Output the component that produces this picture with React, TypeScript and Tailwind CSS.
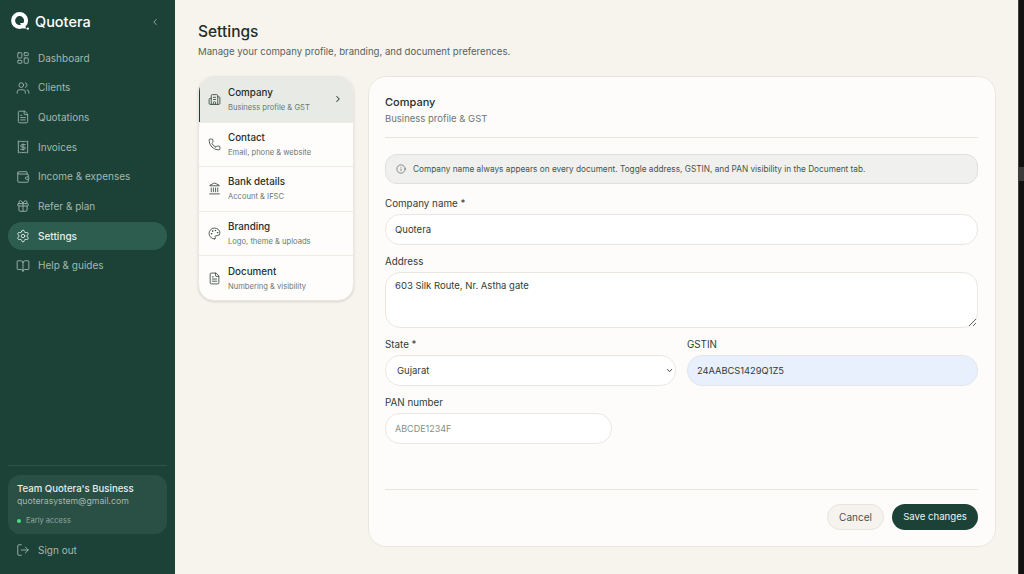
import { BookOpen, Building2, ChevronDown, ChevronLeft, ChevronRight, FileText, Gift, Info, Landmark, LayoutDashboard, LogOut, Palette, Phone, Receipt, Settings, Users, Wallet } from "lucide-react";
import type { ReactNode } from "react";

const navItems = [
  { label: "Dashboard", icon: LayoutDashboard },
  { label: "Clients", icon: Users },
  { label: "Quotations", icon: FileText },
  { label: "Invoices", icon: Receipt },
  { label: "Income & expenses", icon: Wallet },
  { label: "Refer & plan", icon: Gift },
  { label: "Settings", icon: Settings, active: true },
  { label: "Help & guides", icon: BookOpen },
];

const tabs = [
  { label: "Company", sub: "Business profile & GST", icon: Building2, active: true },
  { label: "Contact", sub: "Email, phone & website", icon: Phone },
  { label: "Bank details", sub: "Account & IFSC", icon: Landmark },
  { label: "Branding", sub: "Logo, theme & uploads", icon: Palette },
  { label: "Document", sub: "Numbering & visibility", icon: FileText },
];

function Logo() {
  return (
    <svg width="19" height="19" viewBox="0 0 19 19" fill="none">
      <circle cx="8.6" cy="8.6" r="6.5" stroke="#fff" strokeWidth="4" />
      <path d="M9 11 L12.4 16.4 H15.4 L12 11 Z" fill="#fff" />
      <circle cx="16.8" cy="16.6" r="1.2" fill="#fff" />
    </svg>
  );
}

function Label({ children }: { children: ReactNode }) {
  return <label className="mb-[3px] block h-[14px] text-[9.8px] leading-[14px] text-[#2e3d38]">{children}</label>;
}

export default function App() {
  return (
    <div className="flex h-[574px] w-[1024px] overflow-hidden bg-[#f7f4ee] font-['Inter',sans-serif]">
      <aside className="flex h-full w-[175px] shrink-0 flex-col bg-[#1c4237] px-2">
        <div className="flex h-[43px] items-center justify-between pl-[3px] pr-[7px]">
          <div className="flex items-center gap-[5px]">
            <Logo />
            <span className="text-[14.5px] font-medium text-white">Quotera</span>
          </div>
          <ChevronLeft size={10} className="text-[#a9bcb5]" />
        </div>
        <nav className="mt-[1px] flex flex-col gap-[1.7px]">
          {navItems.map((n) => (
            <div
              key={n.label}
              className={`flex h-[28px] items-center gap-[8px] rounded-[14px] pl-[8px] text-[10px] ${
                n.active ? "bg-[#2d5d4e] font-medium text-[#e6eeea]" : "text-[#a3b8b0]"
              }`}
            >
              <n.icon size={14} strokeWidth={1.5} />
              <span>{n.label}</span>
            </div>
          ))}
        </nav>
        <div className="mt-auto border-t border-[#2f5548] pb-[8px] pt-[9px]">
          <div className="h-[59px] rounded-[12px] bg-[#2a4f44] px-[9px] pt-[7px]">
            <p className="text-[9.6px] leading-[13px] font-medium text-[#e8efec]">Team Quotera's Business</p>
            <p className="text-[8.7px] leading-[12px] text-[#a3b8b0]">quoterasystem@gmail.com</p>
            <p className="mt-[8px] flex items-center gap-[5px] text-[7.5px] leading-[11px] text-[#8fa89e]">
              <span className="h-[4px] w-[4px] rounded-full bg-[#4ade80]" />
              Early access
            </p>
          </div>
          <div className="flex h-[32px] items-center gap-[8px] pl-[8px] text-[10px] text-[#a3b8b0]">
            <LogOut size={14} strokeWidth={1.5} />
            <span>Sign out</span>
          </div>
        </div>
      </aside>

      <main className="flex-1 pl-[23px] pt-[22px]">
        <h1 className="text-[15.5px] leading-[20px] font-medium text-[#1f2f2a]">Settings</h1>
        <p className="mt-[3px] text-[9.6px] leading-[14px] text-[#56635e]">Manage your company profile, branding, and document preferences.</p>

        <div className="mt-[17px] flex items-start gap-[14px]">
          <div className="w-[156px] shrink-0 overflow-hidden rounded-[16px] border border-[#ebe7e0] bg-[#fefdfb] shadow-sm">
            {tabs.map((t, i) => (
              <div
                key={t.label}
                className={`relative flex h-[44.6px] items-center gap-[7px] pl-[9px] pr-[10px] ${
                  t.active ? "bg-[#e8eae6]" : ""
                } ${i > 0 ? "border-t border-[#efece6]" : ""}`}
              >
                {t.active && <span className="absolute inset-y-0 left-0 w-[1px] bg-[#1c4237]" />}
                <t.icon size={13} strokeWidth={1.5} className="shrink-0 text-[#2e3d38]" />
                <div className="min-w-0 flex-1">
                  <p className="text-[9.8px] leading-[14px] font-medium text-[#1f2f2a]">{t.label}</p>
                  <p className="mt-[2px] text-[7.6px] leading-[11px] whitespace-nowrap text-[#6b7873]">{t.sub}</p>
                </div>
                {t.active && <ChevronRight size={10} strokeWidth={2.5} className="text-[#2e3d38]" />}
              </div>
            ))}
          </div>

          <section className="h-[471px] w-[628px] rounded-[18px] border border-[#ebe7e0] bg-[#fefcfa] pl-[16px] pr-[17px] pt-[17px]">
            <div className="border-b border-[#e8e5df] pb-[10px]">
              <h2 className="text-[11px] leading-[16px] font-medium text-[#1f2f2a]">Company</h2>
              <p className="mt-[1px] text-[9.5px] leading-[16px] text-[#6b7873]">Business profile & GST</p>
            </div>

            <div className="mt-[16px] flex h-[30px] items-center gap-[7px] rounded-[12px] border border-[#dfe0db] bg-[#f0f1ee] pl-[10px] text-[8.25px] text-[#46544f]">
              <Info size={10} strokeWidth={1.5} />
              <span>Company name always appears on every document. Toggle address, GSTIN, and PAN visibility in the Document tab.</span>
            </div>

            <div className="mt-[13px]">
              <Label>Company name *</Label>
              <input
                readOnly
                value="Quotera"
                className="block h-[31px] w-full rounded-[15px] border border-[#ebe7e0] bg-white px-[9px] text-[9.5px] text-[#2e3d38] outline-none"
              />
            </div>

            <div className="mt-[10px]">
              <Label>Address</Label>
              <textarea
                readOnly
                value="603 Silk Route, Nr. Astha gate"
                className="block h-[56px] w-full rounded-[15px] border border-[#ebe7e0] bg-white px-[9px] py-[6px] text-[9.5px] leading-[13px] text-[#2e3d38] outline-none"
              />
            </div>

            <div className="mt-[10px] grid grid-cols-[291px_291px] gap-[11px]">
              <div>
                <Label>State *</Label>
                <div className="relative">
                  <select className="block h-[31px] w-full appearance-none rounded-[15px] border border-[#ebe7e0] bg-white pl-[11px] pt-[1px] text-[9.5px] text-[#2e3d38] outline-none">
                    <option>Gujarat</option>
                  </select>
                  <ChevronDown size={9} strokeWidth={2.5} className="absolute right-[2px] top-[11px] text-[#2e3d38]" />
                </div>
              </div>
              <div>
                <Label>GSTIN</Label>
                <input
                  readOnly
                  value="24AABCS1429Q1Z5"
                  className="block h-[31px] w-full rounded-[15px] border border-[#e2e6ec] bg-[#e8f0fe] px-[9px] text-[9.3px] text-[#2e3d38] outline-none"
                />
              </div>
            </div>

            <div className="mt-[10px]">
              <Label>PAN number</Label>
              <input
                readOnly
                placeholder="ABCDE1234F"
                className="block h-[31px] w-[227px] rounded-[15px] border border-[#ebe7e0] bg-white px-[9px] text-[9px] outline-none placeholder:text-[#858f8b]"
              />
            </div>

            <div className="mt-[45px] flex justify-end gap-[8px] border-t border-[#e8e5df] pt-[14px]">
              <button className="h-[26px] w-[57px] rounded-[13px] border border-[#e8e5df] bg-[#f6f3ee] text-[10px] text-[#46544f]">Cancel</button>
              <button className="h-[26px] w-[86px] rounded-[13px] bg-[#1c4237] text-[9.6px] text-[#eef3f0]">Save changes</button>
            </div>
          </section>
        </div>
      </main>

      <div className="h-full w-[6px] shrink-0 border-l border-[#3f3f3c] bg-[#111111] pt-[167px]">
        <div className="h-[14px] w-full bg-[#3a3a3a]" />
      </div>
    </div>
  );
}
